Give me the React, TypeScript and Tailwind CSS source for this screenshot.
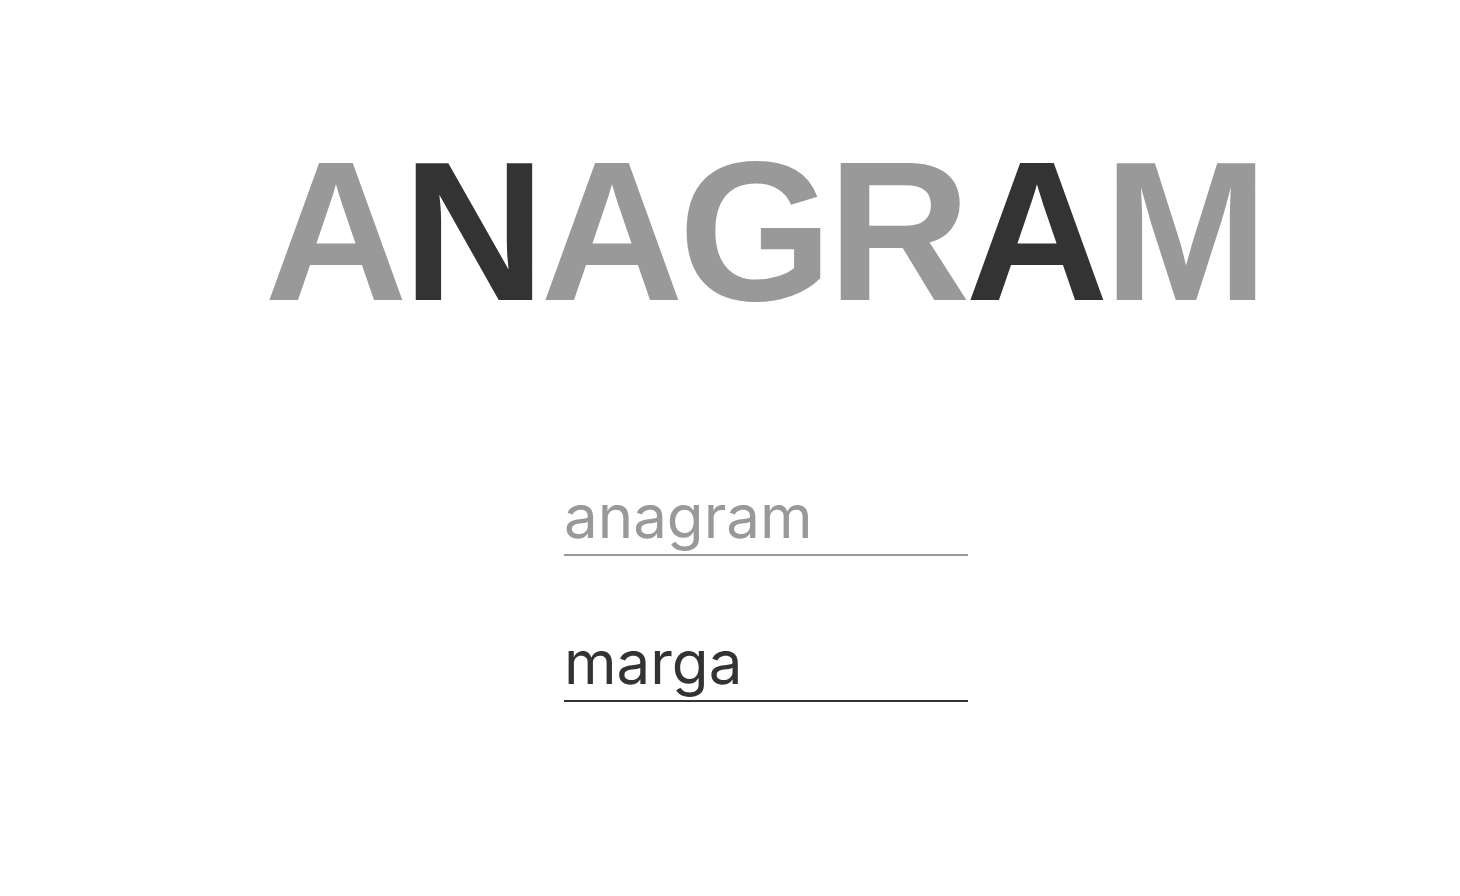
import React, { useState } from "react";

export default function App() {
  const [a, setA] = useState("");
  const [b, setB] = useState("marga");
  const letters: [string, boolean][] = [
    ["A", false],
    ["N", true],
    ["A", false],
    ["G", false],
    ["R", false],
    ["A", true],
    ["M", false],
  ];
  return (
    <div className="min-h-[896px] w-full bg-white flex flex-col items-center pt-[133px] pl-[72px]">
      <h1
        className="text-[198px] leading-none font-bold m-0 whitespace-nowrap tracking-[-5px] pr-[4px]"
        style={{ fontFamily: '"Liberation Sans", Arial, sans-serif' }}
      >
        {letters.map(([ch, dark], i) => (
          <span key={i} className={dark ? "text-[#333333]" : "text-[#999999]"}>
            {ch}
          </span>
        ))}
      </h1>
      <div className="flex flex-col gap-[68px] mt-[147px]">
        <input
          value={a}
          onChange={(e) => setA(e.target.value)}
          placeholder="anagram"
          className="w-[404px] h-[78px] p-0 text-[60px] text-[#333333] placeholder:text-[#999999] bg-transparent border-0 border-b-2 border-[#999999] outline-none"
          style={{ fontFamily: 'Inter, "Noto Sans", sans-serif' }}
        />
        <input
          value={b}
          onChange={(e) => setB(e.target.value)}
          className="w-[404px] h-[78px] p-0 text-[60px] text-[#333333] bg-transparent border-0 border-b-2 border-[#333333] outline-none"
          style={{ fontFamily: 'Inter, "Noto Sans", sans-serif' }}
        />
      </div>
    </div>
  );
}
